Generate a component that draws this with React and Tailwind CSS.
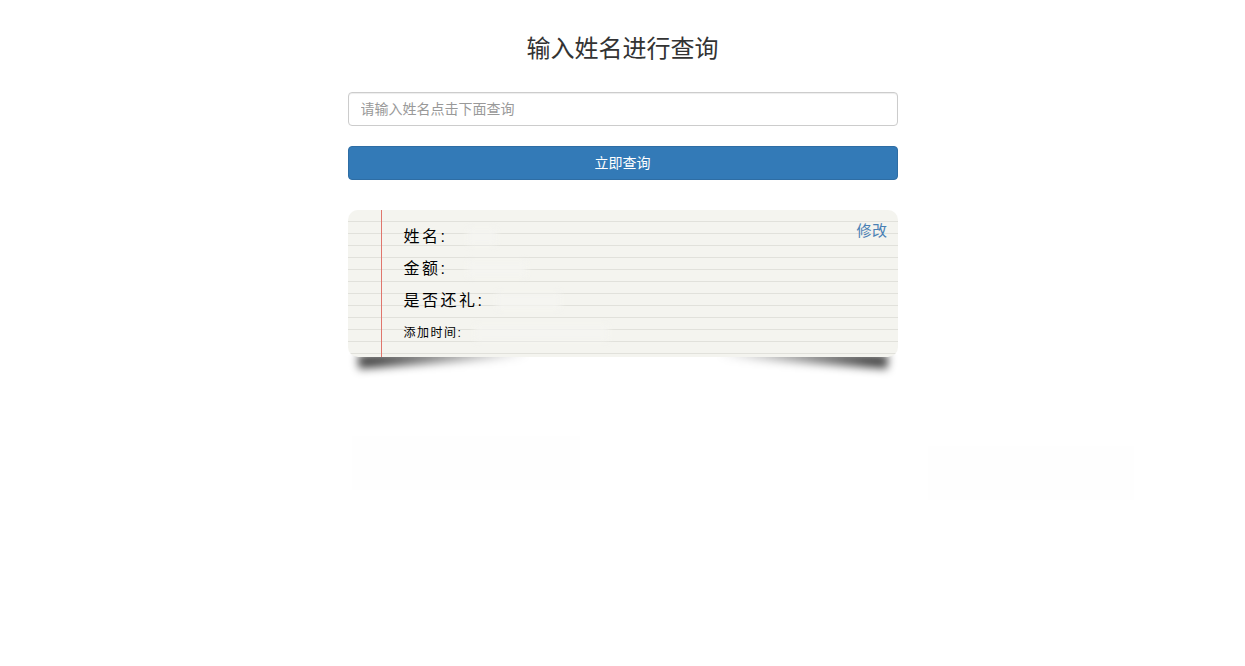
const FONT = "font-['Liberation_Sans','Noto_Sans_CJK_SC',sans-serif]";

const ROWS = [
  { label: "姓名:", smudge: "ml-5 w-[30px]" },
  { label: "金额:", smudge: "ml-5 w-[60px]" },
  { label: "是否还礼:", smudge: "ml-3 w-[65px]" },
  { label: "添加时间:", smudge: "ml-3 w-[135px]", small: true },
];

export default function App() {
  return (
    <div className={`min-h-[666px] overflow-hidden bg-white ${FONT}`}>
      <div className="mx-auto w-[550px] pt-[31px]">
        <h1 className="text-center text-2xl leading-[36px] text-[#333]">输入姓名进行查询</h1>

        <input
          className="mt-[25px] block h-[34px] w-full rounded border border-[#ccc] px-3 text-sm text-[#555] shadow-[inset_0_1px_1px_rgba(0,0,0,0.075)] outline-none placeholder:text-[#999]"
          placeholder="请输入姓名点击下面查询"
        />

        <button className="mt-5 block h-[34px] w-full rounded border border-[#2e6da4] bg-[#337ab7] text-sm text-white">
          立即查询
        </button>

        {/* note paper */}
        <div className="relative isolate mt-[30px]">
          <div className="absolute bottom-[-6px] left-[10px] -z-10 h-[14px] w-[170px] -rotate-[4deg] bg-linear-to-r from-black/70 from-10% to-transparent blur-[4px]"></div>
          <div className="absolute bottom-[-6px] right-[10px] -z-10 h-[14px] w-[170px] rotate-[4deg] bg-linear-to-l from-black/70 from-10% to-transparent blur-[4px]"></div>

          <div className="relative flex h-[147px] overflow-hidden rounded-[10px] bg-[#f4f4ef] bg-[repeating-linear-gradient(to_bottom,transparent_0,transparent_11px,#e1e1db_11px,#e1e1db_12px)]">
            <div className="ml-[33px] w-px shrink-0 bg-[#e0766c]"></div>
            <div className="flex-1 pl-[22px] pt-[11px]">
              {ROWS.map((row) => (
                <div
                  key={row.label}
                  className={`flex h-8 items-center text-black ${row.small ? "text-xs tracking-[1.5px]" : "text-base tracking-[2.5px]"}`}
                >
                  {row.label}
                  {/* erased value */}
                  <span className={`h-4 bg-[#f5f5f1]/80 blur-[3px] ${row.smudge}`}></span>
                </div>
              ))}
            </div>
            <a className="absolute right-[10px] top-[12px] text-[15px] leading-[18px] tracking-[0.5px] text-[#4a80b4]">修改</a>
          </div>
        </div>
      </div>

      {/* faint patches below */}
      <div className="mt-[79px] flex items-start gap-[348px] pl-[352px]">
        <div className="h-[54px] w-[228px] bg-[#fefefe]"></div>
        <div className="mt-[10px] h-[54px] w-[206px] bg-[#fefefe]"></div>
      </div>
    </div>
  );
}
